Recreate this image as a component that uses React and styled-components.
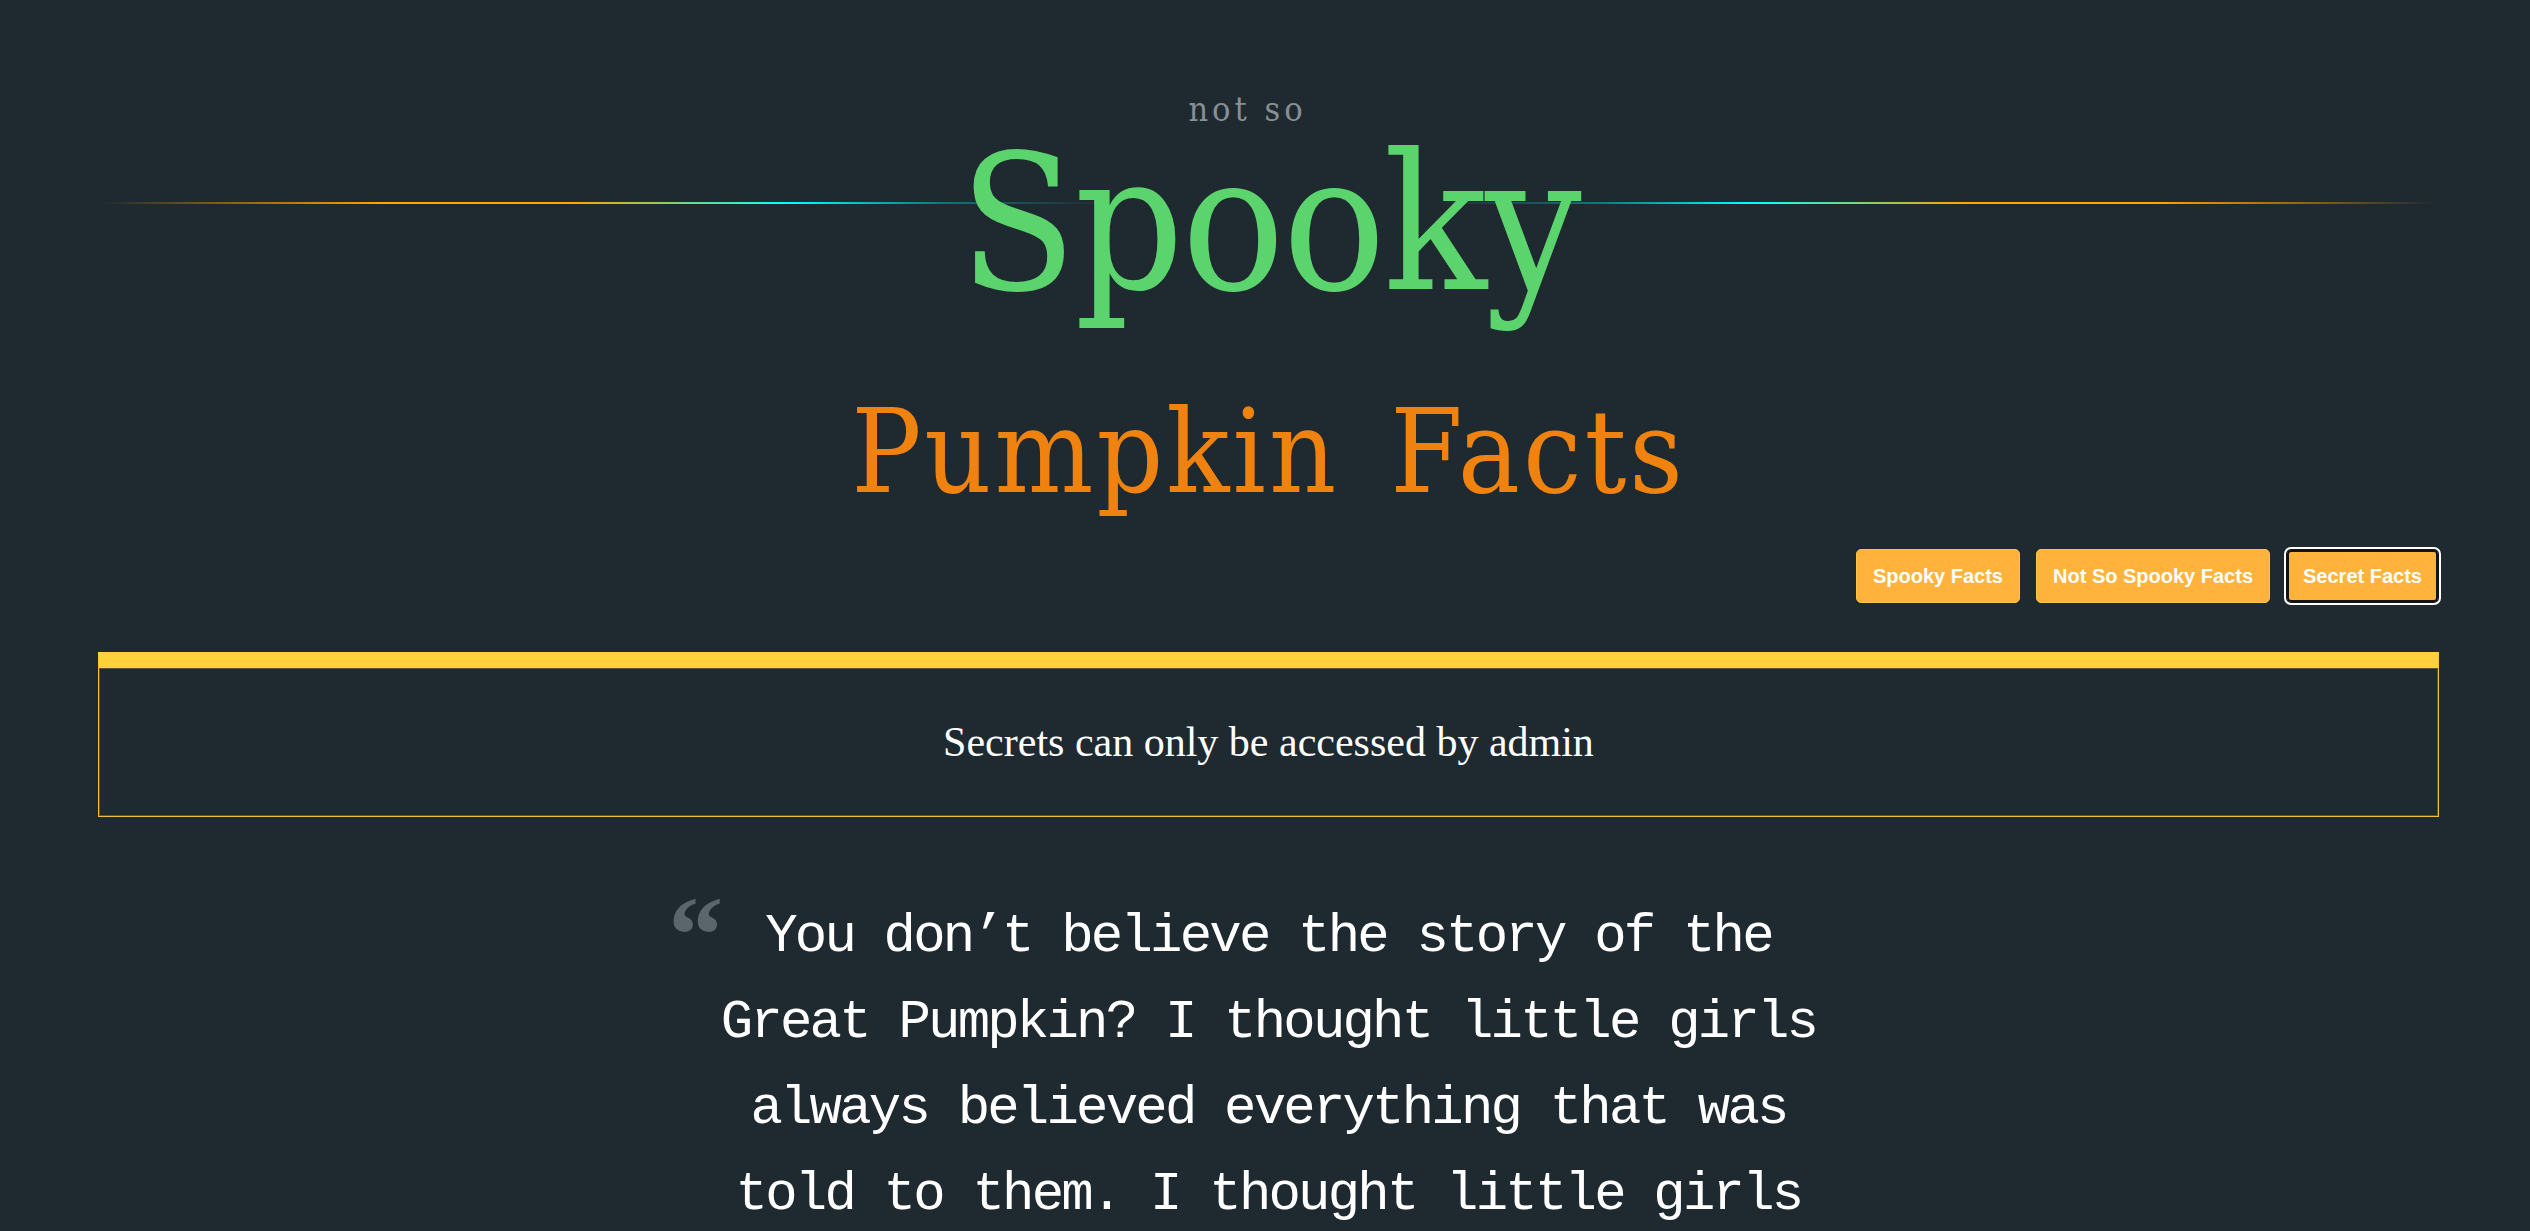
import React from "react";
import styled, { createGlobalStyle } from "styled-components";

const GlobalStyle = createGlobalStyle`
  html, body {
    margin: 0;
    padding: 0;
    background: #1f2930;
  }
  body {
    min-height: 100vh;
    font-family: "Liberation Serif", serif;
    overflow: hidden;
  }
`;

const displayFont = `"DejaVu Serif Condensed", "DejaVu Serif", "Liberation Serif", serif`;

const Page = styled.main`
  display: flex;
  flex-direction: column;
  padding: 92px 91px 0 98px;
  min-height: 100vh;
  box-sizing: border-box;
`;

const Kicker = styled.div`
  font-family: ${displayFont};
  font-stretch: condensed;
  font-size: 34px;
  line-height: 34px;
  letter-spacing: 4px;
  color: #868f92;
  text-align: center;
  margin-right: 42px;
`;

const TitleStack = styled.div`
  display: grid;
  margin-top: 3px;
  & > * {
    grid-area: 1 / 1;
  }
`;

const Rule = styled.div`
  align-self: start;
  margin: 73px 3px 0 5px;
  height: 2px;
  background: linear-gradient(
    to right,
    rgba(255, 165, 0, 0) 0%,
    rgba(255, 165, 0, 0.35) 4%,
    #ffa500 12%,
    #ffa500 20%,
    #00ffff 29.5%,
    rgba(0, 255, 255, 0.35) 36%,
    rgba(0, 255, 255, 0) 43%,
    rgba(0, 255, 255, 0) 57%,
    rgba(0, 255, 255, 0.35) 64%,
    #00ffff 70.5%,
    #ffa500 80%,
    #ffa500 88%,
    rgba(255, 165, 0, 0.35) 96%,
    rgba(255, 165, 0, 0) 100%
  );
`;

const Title = styled.h1`
  margin: 0;
  font-family: ${displayFont};
  font-stretch: condensed;
  font-weight: 400;
  font-size: 190px;
  line-height: 190px;
  letter-spacing: -2px;
  padding-left: 2px;
  color: #5bd46d;
  text-align: center;
  position: relative;
`;

const Subtitle = styled.h2`
  margin: 75px 0 0;
  font-family: ${displayFont};
  font-stretch: condensed;
  font-weight: 400;
  font-size: 116px;
  line-height: 116px;
  letter-spacing: 3px;
  word-spacing: 15px;
  color: #f0820f;
  text-align: center;
`;

const Nav = styled.nav`
  display: flex;
  justify-content: flex-end;
  gap: 16px;
  margin-top: 39px;
`;

const NavButton = styled.button`
  height: 54px;
  padding: 0 16px;
  border: 1px solid #f9c544;
  border-radius: 5px;
  background: #ffb33c;
  color: #ffffff;
  font-family: "Liberation Sans", Arial, sans-serif;
  font-weight: 700;
  font-size: 20px;
  cursor: pointer;
  outline: ${(p) => (p.$active ? "2px solid #ffffff" : "none")};
  outline-offset: 0;
  box-shadow: ${(p) => (p.$active ? "inset 0 0 0 2px #141414" : "none")};
  border-color: ${(p) => (p.$active ? "#141414" : "#f9c544")};
`;

const Panel = styled.section`
  margin-top: 49px;
  border: 1px solid #f2c12e;
  border-top: 16px solid #ffd23b;
  box-shadow: inset 0 0 0 1px #5d5634;
  padding: 50px 20px;
  text-align: center;
  font-family: "Liberation Serif", serif;
  font-size: 42px;
  line-height: 48px;
  color: #ffffff;
`;

const Quote = styled.blockquote`
  align-self: center;
  width: 1110px;
  margin: 77px 0 0;
  font-family: "Liberation Mono", monospace;
  font-size: 54px;
  line-height: 86px;
  letter-spacing: -2.8px;
  color: #ffffff;
  text-align: center;
`;

const QuoteMark = styled.span`
  position: absolute;
  font-family: "Liberation Serif", serif;
  font-weight: 700;
  font-size: 110px;
  line-height: 110px;
  letter-spacing: 0;
  color: #5b666c;
  transform: translate(-97px, -14px);
`;

export default function App() {
  return (
    <>
      <GlobalStyle />
      <Page>
        <header>
          <Kicker>not so</Kicker>
          <TitleStack>
            <Rule />
            <Title>Spooky</Title>
          </TitleStack>
          <Subtitle>Pumpkin Facts</Subtitle>
        </header>
        <Nav>
          <NavButton>Spooky Facts</NavButton>
          <NavButton>Not So Spooky Facts</NavButton>
          <NavButton $active>Secret Facts</NavButton>
        </Nav>
        <Panel>Secrets can only be accessed by admin</Panel>
        <Quote>
          <QuoteMark>“</QuoteMark>
          You don’t believe the story of the Great Pumpkin? I thought little
          girls always believed everything that was told to them. I thought
          little girls were innocent and trusting.
        </Quote>
      </Page>
    </>
  );
}
